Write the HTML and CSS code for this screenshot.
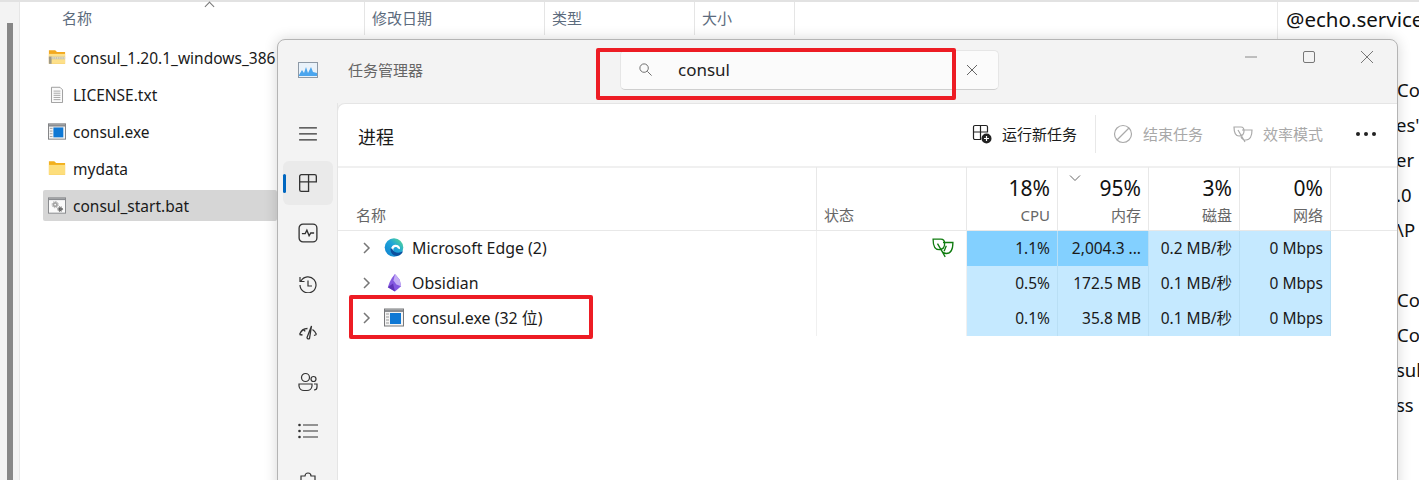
FILE: index.html
```html
<!DOCTYPE html>
<html lang="en">
<head>
<meta charset="UTF-8">
<meta name="viewport" content="width=device-width, initial-scale=1.0">
<title>任务管理器</title>
<link rel="stylesheet" href="styles.css">
</head>
<body>
    <svg class="defs" width="0" height="0">
        <symbol id="exeIcon" viewBox="0 0 20 18">
            <rect x="0.5" y="0.5" width="19" height="17" fill="#f4f4f4" stroke="#77787b"/>
            <rect x="1" y="1" width="18" height="2.5" fill="#8b8d91"/>
            <rect x="2" y="5" width="3" height="1" fill="#9a9a9a"/>
            <rect x="2" y="8" width="3" height="1" fill="#9a9a9a"/>
            <rect x="2" y="11" width="3" height="1" fill="#9a9a9a"/>
            <rect x="2" y="14" width="3" height="1" fill="#9a9a9a"/>
            <rect x="6" y="4.5" width="11" height="11" fill="#0f78d4"/>
        </symbol>
    </svg>

    <div class="desktop">
        <div class="explorer">
            <div class="gutter"><div class="scrollThumb"></div></div>
            <div class="files">
                <div class="colHeader">
                    <div class="colName">名称<span class="sortUp"></span></div>
                    <div class="colDate">修改日期</div>
                    <div class="colType">类型</div>
                    <div class="colSize">大小</div>
                </div>
                <div class="fileList">
                    <div class="fileRow">
                        <svg class="fileIcon" viewBox="0 0 20 18">
                            <path d="M1 1h7l2 2h9v13H1z" fill="#f2a91e"/>
                            <path d="M1 5h18v11H1z" fill="#fde08a"/>
                            <path d="M1 8h18v3H1z" fill="#c9c3a6"/>
                            <path d="M1 8h3v8H1z" fill="#9f9a86"/>
                            <path d="M4 9.500h15" stroke="#f7f4e6" stroke-dasharray="1 1"/>
                        </svg>
                        <span>consul_1.20.1_windows_386</span>
                    </div>
                    <div class="fileRow">
                        <svg class="fileIcon" viewBox="0 0 20 20">
                            <path d="M3.500 1.500h10l3 3v15h-13z" fill="#fafafa" stroke="#8f8f8f"/>
                            <path d="M6 6h8M6 8.500h8M6 11h8M6 13.500h8M6 16h8" stroke="#9c9c9c"/>
                        </svg>
                        <span>LICENSE.txt</span>
                    </div>
                    <div class="fileRow">
                        <svg class="fileIcon"><use href="#exeIcon"/></svg>
                        <span>consul.exe</span>
                    </div>
                    <div class="fileRow">
                        <svg class="fileIcon" viewBox="0 0 20 18">
                            <path d="M1 1h6l2 2h10v13H1z" fill="#f2b01e"/>
                            <path d="M1 5h18v11H1z" fill="#fdde7c"/>
                        </svg>
                        <span>mydata</span>
                    </div>
                    <div class="fileRow selected">
                        <svg class="fileIcon" viewBox="0 0 20 18">
                            <rect x="0.500" y="0.500" width="19" height="17" fill="#fafafa" stroke="#808285"/>
                            <rect x="1" y="1" width="18" height="2" fill="#8b8d91"/>
                            <circle cx="8" cy="8" r="2" fill="none" stroke="#a4a4a4" stroke-width="2"/>
                            <circle cx="8" cy="8" r="3.500" fill="none" stroke="#a4a4a4" stroke-dasharray="1.500 1.200"/>
                            <circle cx="13.500" cy="13" r="1.300" fill="none" stroke="#555" stroke-width="1.500"/>
                            <circle cx="13.500" cy="13" r="2.700" fill="none" stroke="#555" stroke-dasharray="1.200 1"/>
                        </svg>
                        <span>consul_start.bat</span>
                    </div>
                </div>
            </div>
            <div class="notepad">
                <div class="noteLine first">@echo.service</div>
                <div class="noteLine gapAfterTitle">Co</div>
                <div class="noteLine under">es'</div>
                <div class="noteLine under">er</div>
                <div class="noteLine under">.0</div>
                <div class="noteLine">\P</div>
                <div class="noteLine blank"></div>
                <div class="noteLine">Cor</div>
                <div class="noteLine">Co</div>
                <div class="noteLine under">sul</div>
                <div class="noteLine under">ss</div>
            </div>
        </div>

        <div class="taskmgr">
            <div class="titleBar">
                <svg class="appIcon" viewBox="0 0 20 16">
                    <rect x="0.500" y="0.500" width="19" height="15" fill="#e9f2fa" stroke="#8d99a6"/>
                    <path d="M1 13l3-5 2 3 2-6 2 6 3-6 2 5 4 1v3H1z" fill="#4aa5ee"/>
                </svg>
                <span class="appName">任务管理器</span>
                <div class="searchBox">
                    <svg class="searchIcon" viewBox="0 0 16 16">
                        <circle cx="6.500" cy="6.500" r="4.500" fill="none" stroke="#666"/>
                        <path d="M10 10l4.500 4.500" stroke="#666"/>
                    </svg>
                    <span class="searchText">consul</span>
                    <svg class="searchClear" viewBox="0 0 12 12">
                        <path d="M1 1l10 10M11 1L1 11" stroke="#666" fill="none"/>
                    </svg>
                </div>
                <div class="winButtons">
                    <svg viewBox="0 0 14 14"><path d="M1 7h12" stroke="#888"/></svg>
                    <svg viewBox="0 0 14 14"><rect x="1.500" y="1.500" width="11" height="11" rx="1.500" fill="none" stroke="#777"/></svg>
                    <svg viewBox="0 0 14 14"><path d="M1 1l12 12M13 1L1 13" stroke="#777" fill="none"/></svg>
                </div>
            </div>

            <div class="mgrBody">
                <div class="sidebar">
                    <svg class="navIcon menu" viewBox="0 0 20 20"><path d="M1 4h18M1 10h18M1 16h18" stroke="#333" stroke-width="1.200"/></svg>
                    <div class="navItem active">
                        <svg class="navIcon" viewBox="0 0 18 18"><path d="M9.500 8V1.500H3A1.500 1.500 0 0 0 1.500 3v12A1.500 1.500 0 0 0 3 16.500h6.500V8M9.500 1.500H15A1.500 1.500 0 0 1 16.500 3v5H1.500" fill="none" stroke="#333" stroke-width="1.200"/></svg>
                    </div>
                    <div class="navItem afterActive">
                        <svg class="navIcon" viewBox="0 0 18 18"><rect x="1" y="1" width="16" height="16" rx="3.500" fill="none" stroke="#333" stroke-width="1.200"/><path d="M3.500 9.500h3l1.500-3 2 5 1.500-2.500h3" fill="none" stroke="#333" stroke-width="1.200"/></svg>
                    </div>
                    <div class="navItem">
                        <svg class="navIcon" viewBox="0 -2 20 20"><path d="M3 6a8 8 0 1 1-1 4M2 2v4.500h4.500M10 5.500V11h4" fill="none" stroke="#333" stroke-width="1.200"/></svg>
                    </div>
                    <div class="navItem">
                        <svg class="navIcon" viewBox="0 0 20 20"><path d="M1.500 12.500C3 8.500 6 6.500 9.500 6.500M18.500 12.500C17.500 10 16 8.500 14.500 7.500M1.500 12.500l3 .5M18.500 12.500l-2.500 1M13.500 4L9 15.500a1.500 1.500 0 0 0 2.500 1zM6 7l1 2.500" fill="none" stroke="#333" stroke-width="1.300"/></svg>
                    </div>
                    <div class="navItem">
                        <svg class="navIcon" viewBox="0 0 20 20"><circle cx="7.500" cy="5.500" r="4" fill="none" stroke="#333" stroke-width="1.200"/><circle cx="15.500" cy="7" r="2.500" fill="none" stroke="#333" stroke-width="1.200"/><path d="M1 12h13v2a5 5 0 0 1-5 4.500H6A5 5 0 0 1 1 14zM16 18a3 3 0 0 0 3-3v-3h-3" fill="none" stroke="#333" stroke-width="1.200"/></svg>
                    </div>
                    <div class="navItem">
                        <svg class="navIcon" viewBox="0 0 20 20"><path d="M5 4h15M5 10h15M5 16h15" stroke="#333" stroke-width="1.200"/><circle cx="1.500" cy="4" r="1.300" fill="#333"/><circle cx="1.500" cy="10" r="1.300" fill="#333"/><circle cx="1.500" cy="16" r="1.300" fill="#333"/></svg>
                    </div>
                    <div class="navItem">
                        <svg class="navIcon" viewBox="0 0 20 20"><path d="M7 5a3 3 0 0 1 6 0h4v13H3V5z" fill="none" stroke="#333" stroke-width="1.200"/></svg>
                    </div>
                </div>

                <div class="content">
                    <div class="toolbar">
                        <h2 class="pageTitle">进程</h2>
                        <div class="toolButton">
                            <svg class="toolIcon" viewBox="0 0 20 20">
                                <path d="M8.500 8V1.500H3A1.500 1.500 0 0 0 1.500 3v11A1.500 1.500 0 0 0 3 15.500h5.500V8M8.500 1.500H14A1.500 1.500 0 0 1 15.500 3v5h-14" fill="none" stroke="#222" stroke-width="1.200"/>
                                <circle cx="14.500" cy="14.500" r="5" fill="#222"/>
                                <path d="M14.500 12v5M12 14.500h5" stroke="#fff" stroke-width="1.200"/>
                            </svg>
                            <span>运行新任务</span>
                        </div>
                        <div class="toolDivider"></div>
                        <div class="toolButton disabled endTask">
                            <svg class="toolIcon" viewBox="0 0 20 20"><circle cx="10" cy="10" r="8.500" fill="none" stroke="#aaa" stroke-width="1.200"/><path d="M4 16L16 4" stroke="#aaa" stroke-width="1.200"/></svg>
                            <span>结束任务</span>
                        </div>
                        <div class="toolButton disabled ecoMode">
                            <svg class="toolIcon" viewBox="0 0 20 18"><path d="M1 2h7c2 0 3 2 3 4 0 3-2 5-5 5-3 0-5-3-5-9zM9 5h10c0 6-2 10-6 10-2 0-4-1-5-3M5 5l7 12" fill="none" stroke="#aaa" stroke-width="1.200"/></svg>
                            <span>效率模式</span>
                        </div>
                        <div class="moreDots"><i></i><i></i><i></i></div>
                    </div>

                    <div class="procTable">
                        <div class="headCell nameHead"><span class="headLabel">名称</span></div>
                        <div class="headCell statusHead"><span class="headLabel">状态</span></div>
                        <div class="headCell numHead"><span class="headPct">18%</span><span class="headLabel">CPU</span></div>
                        <div class="headCell numHead sorted">
                            <svg class="sortDown" viewBox="0 0 12 6"><path d="M1 .5l5 5 5-5" fill="none" stroke="#666"/></svg>
                            <span class="headPct">95%</span><span class="headLabel">内存</span>
                        </div>
                        <div class="headCell numHead"><span class="headPct">3%</span><span class="headLabel">磁盘</span></div>
                        <div class="headCell numHead"><span class="headPct">0%</span><span class="headLabel">网络</span></div>
                        <div class="headCell restHead"></div>

                        <div class="nameCell">
                            <svg class="chevron" viewBox="0 0 8 12"><path d="M1 1l5 5-5 5" fill="none" stroke="#777" stroke-width="1.500"/></svg>
                            <svg class="procIcon" viewBox="0 0 20 20">
                                <defs>
                                    <linearGradient id="edgeA" x1="0" y1="1" x2="1" y2="0"><stop offset="0" stop-color="#0f7fd0"/><stop offset="0.55" stop-color="#1fa5d8"/><stop offset="1" stop-color="#5fe08a"/></linearGradient>
                                </defs>
                                <circle cx="10" cy="10" r="9.800" fill="url(#edgeA)"/>
                                <path d="M8 13.500C7.500 9.500 10 8 12.300 8.300c2 .2 3.200 1.700 2.700 3" fill="none" stroke="#fff" stroke-width="2.500"/>
                                <path d="M6.500 11C5.500 16 10 19.500 14 18.800c2.500-.5 4.500-2.300 5.500-4.800-4 2.500-10 2-11.500-3z" fill="#0b4f9e"/>
                            </svg>
                            <span>Microsoft Edge (2)</span>
                        </div>
                        <div class="statusCell">
                            <svg class="leafIcon" viewBox="0 0 20 18"><path d="M1 1h7c2 0 3.500 1.500 3.500 4 0 3.500-2 5.500-5 5.500C3 10.500 1 7 1 1zM10 4h9c0 7-2 10-6 10-2 0-3.500-1-4.500-3M5 5l7 12M13 7l-2 5" fill="none" stroke="#107c10" stroke-width="1.200"/></svg>
                        </div>
                        <div class="numCell hot">1.1%</div>
                        <div class="numCell hot">2,004.3 ...</div>
                        <div class="numCell">0.2 MB/秒</div>
                        <div class="numCell">0 Mbps</div>
                        <div class="restCell"></div>

                        <div class="nameCell">
                            <svg class="chevron" viewBox="0 0 8 12"><path d="M1 1l5 5-5 5" fill="none" stroke="#777" stroke-width="1.500"/></svg>
                            <svg class="procIcon" viewBox="0 0 20 20">
                                <path d="M11 1L16 7l1.500 7-6.500 5.500L3.500 15 5.500 9.500 8 5z" fill="#8458e0"/>
                                <path d="M11 1L9.500 8l3 4 5 2-1.500-7z" fill="#c4adf5"/>
                                <path d="M3.500 15l5.500-4 2 8.500z" fill="#5f33b8"/>
                            </svg>
                            <span>Obsidian</span>
                        </div>
                        <div class="statusCell"></div>
                        <div class="numCell">0.5%</div>
                        <div class="numCell">172.5 MB</div>
                        <div class="numCell">0.1 MB/秒</div>
                        <div class="numCell">0 Mbps</div>
                        <div class="restCell"></div>

                        <div class="nameCell">
                            <svg class="chevron" viewBox="0 0 8 12"><path d="M1 1l5 5-5 5" fill="none" stroke="#777" stroke-width="1.500"/></svg>
                            <svg class="procIcon"><use href="#exeIcon"/></svg>
                            <span>consul.exe (32 位)</span>
                        </div>
                        <div class="statusCell"></div>
                        <div class="numCell">0.1%</div>
                        <div class="numCell">35.8 MB</div>
                        <div class="numCell">0.1 MB/秒</div>
                        <div class="numCell">0 Mbps</div>
                        <div class="restCell"></div>
                    </div>
                </div>
            </div>
        </div>

        <div class="redBox searchMark"></div>
        <div class="redBox rowMark"></div>
    </div>
</body>
</html>
```

FILE: styles.css
```css
html, body {
    margin: 0;
    height: 480px;
    overflow: hidden;
    background-color: #fff;
}

body {
    font-family: "Noto Sans", "Noto Sans CJK SC", sans-serif;
    color: #1a1a1a;
}

.defs {
    position: absolute;
}

.desktop {
    position: relative;
    width: 1419px;
    height: 480px;
    overflow: hidden;
}

/* explorer behind the task manager */
.explorer {
    display: flex;
    height: 480px;
    border-top: 2px solid #e2e2e2;
    box-sizing: border-box;
}

.gutter {
    width: 20px;
    flex: none;
    background-color: #f3f3f3;
    border-right: 1px solid #e6e6e6;
    box-sizing: border-box;
    padding: 21px 0 0 7px;
}

.scrollThumb {
    width: 6px;
    height: 100%;
    background-color: #878787;
}

.files {
    width: 1257px;
    flex: none;
}

.colHeader {
    display: flex;
    height: 33px;
    font-size: 15px;
    color: #5c6b7d;
    line-height: 33px;
}

.colHeader div {
    box-sizing: border-box;
    border-right: 1px solid #e5e5e5;
    padding-left: 7px;
}

.colHeader .colName {
    position: relative;
    width: 345px;
    padding-left: 42px;
}

.colDate {
    width: 180px;
}

.colType {
    width: 150px;
}

.colSize {
    width: 100px;
}

.sortUp {
    position: absolute;
    left: 186px;
    top: 1px;
    width: 6px;
    height: 6px;
    border-left: 1px solid #777;
    border-top: 1px solid #777;
    transform: rotate(45deg);
}

.fileList {
    padding: 7px 0 0 23px;
}

.fileRow {
    display: flex;
    align-items: center;
    gap: 7px;
    width: 234px;
    height: 31px;
    margin-bottom: 6px;
    padding-left: 5px;
    box-sizing: border-box;
    font-size: 15.500px;
    white-space: nowrap;
    border-radius: 2px;
}

.fileRow.selected {
    background-color: #d6d6d6;
}

.fileIcon {
    width: 18px;
    height: 17px;
    flex: none;
}

.notepad {
    flex: 1;
    min-width: 0;
    border-left: 1px solid #e8e8e8;
    font-size: 18.500px;
    color: #111;
    white-space: nowrap;
}

.noteLine {
    height: 35px;
    line-height: 35px;
    padding-left: 119px;
}

.noteLine.first {
    height: 36px;
    padding-left: 8px;
    font-size: 20.500px;
}

.noteLine.gapAfterTitle {
    margin-top: 34px;
}

.noteLine.under {
    padding-left: 118px;
}

/* task manager window */
.taskmgr {
    position: absolute;
    left: 277px;
    top: 39px;
    width: 1121px;
    height: 460px;
    background-color: #f3f3f3;
    border: 1px solid #b4b4b4;
    border-radius: 8px 8px 0 0;
    box-sizing: border-box;
    box-shadow: 0 0 14px rgba(0, 0, 0, 0.16);
    overflow: hidden;
}

.titleBar {
    display: flex;
    align-items: center;
    height: 63px;
    box-sizing: border-box;
    padding-bottom: 4px;
}

.appIcon {
    width: 20px;
    height: 16px;
    margin-left: 20px;
    flex: none;
}

.appName {
    margin-left: 30px;
    font-size: 15px;
    color: #666;
}

.searchBox {
    display: flex;
    align-items: center;
    width: 379px;
    height: 40px;
    margin-left: 197px;
    box-sizing: border-box;
    background-color: #fbfbfb;
    border: 1px solid #e6e6e6;
    border-bottom-color: #cfcfcf;
    border-radius: 5px;
}

.searchIcon {
    width: 15px;
    height: 15px;
    margin-left: 17px;
    flex: none;
}

.searchText {
    margin-left: 25px;
    font-size: 17px;
    color: #222;
}

.searchClear {
    width: 12px;
    height: 12px;
    margin-left: auto;
    margin-right: 20px;
}

.winButtons {
    display: flex;
    margin-left: auto;
    margin-right: 23px;
    margin-top: -26px;
    gap: 44px;
}

.winButtons svg {
    width: 14px;
    height: 14px;
}

.mgrBody {
    display: flex;
    height: 400px;
}

.sidebar {
    width: 60px;
    flex: none;
    display: flex;
    flex-direction: column;
    align-items: center;
    border-right: 1px solid #e5e5e5;
    box-sizing: border-box;
}

.navIcon {
    width: 20px;
    height: 20px;
}

.navIcon.menu {
    margin-top: 21px;
    margin-bottom: 12px;
}

.sidebar .navItem {
    display: flex;
    align-items: center;
    justify-content: center;
    position: relative;
    width: 50px;
    height: 45px;
    margin-top: 5px;
    border-radius: 6px;
}

.sidebar .navItem.afterActive {
    margin-top: 6px;
}

.navItem.active {
    background-color: #eaeaea;
}

.navItem.active::before {
    content: "";
    position: absolute;
    left: 0;
    top: 13px;
    width: 3px;
    height: 19px;
    border-radius: 2px;
    background-color: #0067c0;
}

.content {
    flex: 1;
    min-width: 0;
    background-color: #fff;
    border-top: 1px solid #e5e5e5;
    border-left: 1px solid #e5e5e5;
    border-top-left-radius: 8px;
    margin-left: -1px;
}

.toolbar {
    display: flex;
    align-items: center;
    height: 64px;
    box-sizing: border-box;
    padding-bottom: 3px;
    border-bottom: 2px solid #f0f0f0;
    font-size: 15px;
}

.pageTitle {
    margin: 4px auto 0 20px;
    font-size: 18px;
    font-weight: normal;
}

.toolButton {
    display: flex;
    align-items: center;
    gap: 10px;
}

.toolButton.disabled {
    color: #a8a8a8;
}

.toolIcon {
    width: 20px;
    height: 20px;
}

.toolDivider {
    width: 1px;
    height: 38px;
    margin: 0 17px 0 18px;
    background-color: #e8e8e8;
}

.ecoMode {
    margin-left: 30px;
}

.moreDots {
    display: flex;
    gap: 4px;
    margin: 0 21px 0 33px;
}

.moreDots i {
    width: 4px;
    height: 4px;
    border-radius: 50%;
    background-color: #222;
}

.procTable {
    display: grid;
    grid-template-columns: 479px 150px repeat(4, 91px) 1fr;
    grid-template-rows: 64px repeat(3, 35px);
    margin-top: -1px;
}

.headCell {
    display: flex;
    flex-direction: column;
    justify-content: flex-end;
    box-sizing: border-box;
    border-bottom: 1px solid #e8e8e8;
    border-right: 1px solid #e8e8e8;
    padding: 0 7px 5px;
    position: relative;
}

.nameHead {
    padding-left: 18px;
}

.restHead {
    border-right: none;
}

.numHead {
    text-align: right;
}

.headPct {
    font-size: 21px;
    line-height: 26px;
    margin-bottom: 4px;
    color: #111;
}

.headLabel {
    font-size: 15px;
    line-height: 20px;
    color: #666;
}

.sortDown {
    position: absolute;
    left: 11px;
    top: 8px;
    width: 12px;
    height: 6px;
}

.nameCell {
    display: flex;
    align-items: center;
    font-size: 15.900px;
    padding: 0 0 2px 25px;
    border-right: 1px solid #f0f0f0;
}

.chevron {
    width: 8px;
    height: 12px;
    margin-right: 13px;
    flex: none;
}

.procIcon {
    width: 20px;
    height: 19px;
    margin-right: 8px;
    flex: none;
}

.statusCell {
    display: flex;
    align-items: center;
    justify-content: flex-end;
    padding: 0 12px 2px 0;
    border-right: 1px solid #f0f0f0;
}

.leafIcon {
    width: 22px;
    height: 20px;
}

.numCell {
    background-color: #c5e9ff;
    font-size: 15.500px;
    line-height: 35px;
    text-align: right;
    padding-right: 7px;
    border-right: 1px solid #b9dff5;
    white-space: nowrap;
}

.numCell.hot {
    background-color: #83d0ff;
}

/* red annotation boxes on top of the screenshot */
.redBox {
    position: absolute;
    border: 4px solid #ed1c24;
    border-radius: 2px;
    box-sizing: border-box;
}

.searchMark {
    left: 596px;
    top: 48px;
    width: 360px;
    height: 52px;
}

.rowMark {
    left: 349px;
    top: 295px;
    width: 244px;
    height: 44px;
}
```
